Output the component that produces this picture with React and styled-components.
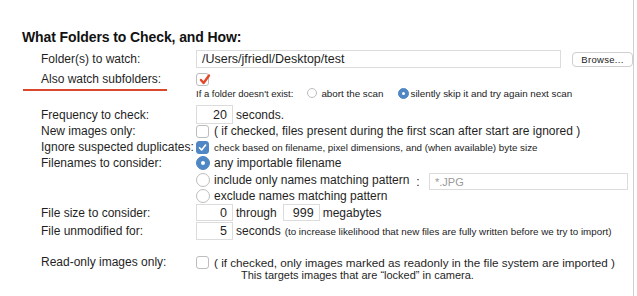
import styled, { createGlobalStyle } from "styled-components";

const GlobalStyle = createGlobalStyle`
  html, body {
    margin: 0;
    padding: 0;
    background: #fff;
  }
  body {
    font-family: "Liberation Sans", Arial, sans-serif;
    color: #1f1f1f;
  }
`;

const Page = styled.div`
  width: 634px;
  height: 296px;
  box-sizing: border-box;
  border-right: 1px solid #cfcfcf;
  padding: 28px 0 0 22px;
  overflow: hidden;
`;

const Title = styled.h2`
  margin: 0;
  font-size: 14px;
  line-height: 18px;
  font-weight: 700;
  letter-spacing: -0.1px;
  color: #111;
`;

const Form = styled.div`
  display: flex;
  flex-direction: column;
`;

const Row = styled.div`
  display: flex;
  align-items: center;
  height: ${({ h }) => h}px;
  margin-top: ${({ mt }) => mt || 0}px;
`;

const Label = styled.div`
  position: relative;
  width: 155px;
  padding-left: 19px;
  flex-shrink: 0;
  font-size: 12px;
  white-space: nowrap;

  ${({ marked }) =>
    marked &&
    `
    &::after {
      content: "";
      position: absolute;
      left: 1px;
      width: 144px;
      bottom: -5px;
      height: 2px;
      background: #d9482d;
    }
  `}
`;

const Content = styled.div`
  display: flex;
  align-items: center;
  flex: 1;
  min-width: 0;
  font-size: ${({ size }) => size || 12}px;
  white-space: nowrap;
`;

const Small = styled.span`
  font-size: ${({ size }) => size || 9.8}px;
  color: #222;
  margin-left: ${({ ml }) => ml || 0}px;
`;

const Field = styled.div`
  box-sizing: border-box;
  height: ${({ h }) => h || 18}px;
  width: ${({ w }) => w}px;
  border: 1px solid #dcdcdc;
  background: #fff;
  display: flex;
  align-items: center;
  justify-content: ${({ right }) => (right ? "flex-end" : "flex-start")};
  padding: 0 5px;
  font-size: ${({ size }) => size || 12.5}px;
  color: ${({ muted }) => (muted ? "#9a9a9a" : "#1f1f1f")};
  margin-left: ${({ ml }) => ml || 0}px;
`;

const Browse = styled.div`
  box-sizing: border-box;
  margin-left: 11px;
  width: 61px;
  height: 15px;
  border: 1px solid #cfcfcf;
  border-radius: 4px;
  display: flex;
  align-items: center;
  justify-content: center;
  font-size: 9.5px;
  letter-spacing: 0.3px;
  color: #222;
  background: #fff;
`;

const After = styled.span`
  margin-left: ${({ ml }) => ml || 3}px;
`;

const Box = styled.span`
  position: relative;
  box-sizing: border-box;
  display: inline-flex;
  align-items: center;
  justify-content: center;
  width: 13px;
  height: 13px;
  border-radius: 3px;
  border: 1px solid ${({ blue }) => (blue ? "#4f86c4" : "#bdbdbd")};
  background: ${({ blue }) => (blue ? "#4f86c4" : "#fff")};
  flex-shrink: 0;
  margin-right: 5px;

  svg {
    position: absolute;
  }
`;

const Radio = styled.span`
  box-sizing: border-box;
  display: inline-flex;
  align-items: center;
  justify-content: center;
  width: ${({ size }) => size}px;
  height: ${({ size }) => size}px;
  border-radius: 50%;
  border: 1px solid ${({ on }) => (on ? "#4f86c4" : "#bdbdbd")};
  background: ${({ on }) => (on ? "#4f86c4" : "#fff")};
  flex-shrink: 0;
  margin-right: ${({ mr }) => mr || 4}px;
  margin-left: ${({ ml }) => ml || 0}px;

  &::after {
    content: "";
    display: ${({ on }) => (on ? "block" : "none")};
    width: ${({ size }) => Math.round(size / 3.5)}px;
    height: ${({ size }) => Math.round(size / 3.5)}px;
    border-radius: 50%;
    background: #fff;
  }
`;

const Options = styled.div`
  display: flex;
`;

const RadioColumn = styled.div`
  display: flex;
  flex-direction: column;
  width: 217px;
  margin-top: 1px;
`;

const OptionRow = styled.div`
  display: flex;
  align-items: center;
  height: 16px;
  margin-top: ${({ mt }) => mt || 0}px;
  font-size: 12px;
  white-space: nowrap;
`;

const Pattern = styled.div`
  display: flex;
  align-items: center;
  height: 17px;
  margin-top: 19px;
`;

const Colon = styled.span`
  width: 10px;
  font-size: 12px;
  text-align: center;
`;

const SecondLine = styled.div`
  padding-left: 219px;
  height: 13px;
  line-height: 13px;
  font-size: 11px;
  white-space: nowrap;
`;

const RedCheck = () => (
  <svg width="12" height="13" viewBox="0 0 12 13" style={{ left: 2, top: -1 }}>
    <path
      d="M2 7 L4.6 10 L10 2.5"
      fill="none"
      stroke="#e5462a"
      strokeWidth="2.4"
      strokeLinecap="round"
      strokeLinejoin="round"
    />
  </svg>
);

const WhiteCheck = () => (
  <svg width="11" height="11" viewBox="0 0 11 11">
    <path
      d="M2.5 5.8 L4.6 8 L8.6 3"
      fill="none"
      stroke="#fff"
      strokeWidth="1.6"
      strokeLinecap="round"
      strokeLinejoin="round"
    />
  </svg>
);

export default function App() {
  return (
    <>
      <GlobalStyle />
      <Page>
        <Title>What Folders to Check, and How:</Title>
        <Form>
          <Row h={18} mt={4}>
            <Label>Folder(s) to watch:</Label>
            <Content>
              <Field w={365} size={12.5}>/Users/jfriedl/Desktop/test</Field>
              <Browse>Browse...</Browse>
            </Content>
          </Row>

          <Row h={18} mt={2}>
            <Label marked>Also watch subfolders:</Label>
            <Content>
              <Box>
                <RedCheck />
              </Box>
            </Content>
          </Row>

          <Row h={10}>
            <Label />
            <Content>
              <Small size={9.5}>If a folder doesn't exist:</Small>
              <Radio size={10} ml={14} mr={4} />
              <Small>abort the scan</Small>
              <Radio size={11} on ml={14} mr={2} />
              <Small>silently skip it and try again next scan</Small>
            </Content>
          </Row>

          <Row h={19} mt={7}>
            <Label>Frequency to check:</Label>
            <Content>
              <Field w={37} h={19} right>20</Field>
              <After>seconds.</After>
            </Content>
          </Row>

          <Row h={14}>
            <Label>New images only:</Label>
            <Content>
              <Box />
              ( if checked, files present during the first scan after start are ignored )
            </Content>
          </Row>

          <Row h={14} mt={2}>
            <Label>Ignore suspected duplicates:</Label>
            <Content>
              <Box blue>
                <WhiteCheck />
              </Box>
              <Small>check based on filename, pixel dimensions, and (when available) byte size</Small>
            </Content>
          </Row>

          <Options>
            <Label as="div" style={{ height: 16, lineHeight: "16px", marginTop: 1 }}>
              Filenames to consider:
            </Label>
            <RadioColumn>
              <OptionRow>
                <Radio size={14} on />
                any importable filename
              </OptionRow>
              <OptionRow mt={1}>
                <Radio size={14} />
                include only names matching pattern
              </OptionRow>
              <OptionRow>
                <Radio size={14} />
                exclude names matching pattern
              </OptionRow>
            </RadioColumn>
            <Pattern>
              <Colon>:</Colon>
              <Field w={199} h={17} size={11} muted ml={6}>*.JPG</Field>
            </Pattern>
          </Options>

          <Row h={17}>
            <Label>File size to consider:</Label>
            <Content>
              <Field w={37} h={17} right>0</Field>
              <After>through</After>
              <Field w={37} h={17} right ml={6}>999</Field>
              <After>megabytes</After>
            </Content>
          </Row>

          <Row h={18} mt={1}>
            <Label>File unmodified for:</Label>
            <Content>
              <Field w={37} h={18} right>5</Field>
              <After>seconds</After>
              <Small ml={4}>(to increase likelihood that new files are fully written before we try to import)</Small>
            </Content>
          </Row>

          <Row h={14} mt={15}>
            <Label>Read-only images only:</Label>
            <Content size={11.7}>
              <Box />
              ( if checked, only images marked as readonly in the file system are imported )
            </Content>
          </Row>
          <SecondLine>This targets images that are “locked” in camera.</SecondLine>
        </Form>
      </Page>
    </>
  );
}
